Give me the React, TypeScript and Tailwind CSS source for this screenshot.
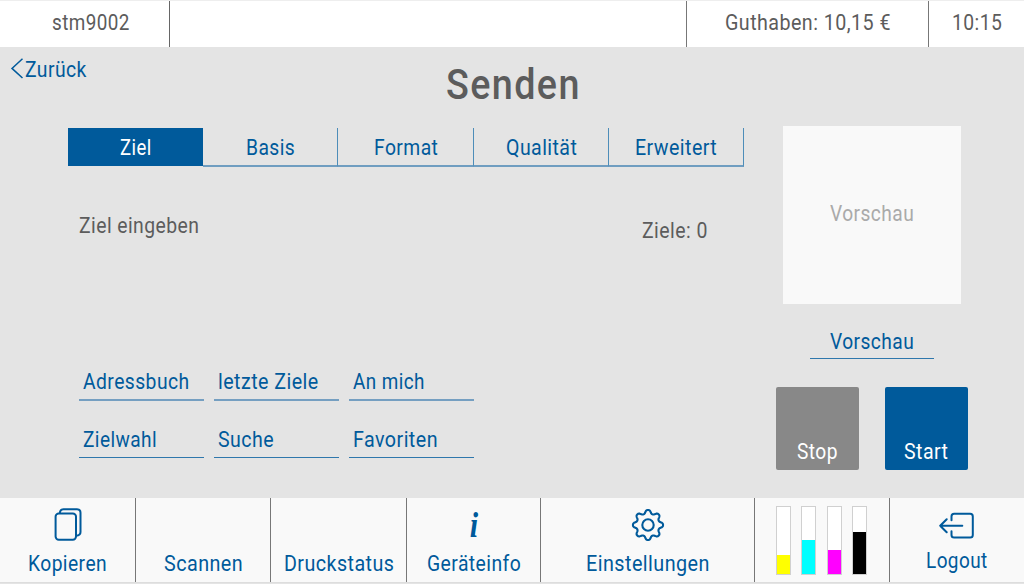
import { useLayoutEffect, useRef, useState } from "react";
import type { ReactNode } from "react";
import clsx from "clsx";

/** Condensed label: squeezes its glyphs horizontally to the given width. */
function Label({ text, width, className }: { text: string; width: number; className?: string }) {
  const inner = useRef<HTMLSpanElement>(null);
  const [scale, setScale] = useState(0.9);
  useLayoutEffect(() => {
    if (inner.current) setScale(width / inner.current.offsetWidth);
  }, [text, width]);
  return (
    <span className={clsx("block shrink-0", className)} style={{ width }}>
      <span
        ref={inner}
        className="inline-block origin-left whitespace-nowrap align-top"
        style={{ transform: `scaleX(${scale})` }}
      >
        {text}
      </span>
    </span>
  );
}

const tabs = [
  { text: "Ziel", width: 32 },
  { text: "Basis", width: 49 },
  { text: "Format", width: 64 },
  { text: "Qualität", width: 71 },
  { text: "Erweitert", width: 82 },
];

const linkRows = [
  [
    { text: "Adressbuch", width: 107 },
    { text: "letzte Ziele", width: 101 },
    { text: "An mich", width: 72 },
  ],
  [
    { text: "Zielwahl", width: 74.5 },
    { text: "Suche", width: 56 },
    { text: "Favoriten", width: 85 },
  ],
];

const toners = [
  { name: "yellow", color: "bg-[#ffff00]", level: 19.5 },
  { name: "cyan", color: "bg-[#00ffff]", level: 34 },
  { name: "magenta", color: "bg-[#ff00ff]", level: 24.5 },
  { name: "black", color: "bg-black", level: 42.5 },
];

function CopyIcon() {
  return (
    <svg width="28" height="34" viewBox="0 0 28 34" fill="none" stroke="currentColor" strokeWidth="2">
      <rect x="1.6" y="5.4" width="20.4" height="26.4" rx="3.2" />
      <path d="M5.8 5.2C6 2.6 7.1 1.2 9.4 1.2H23C25.2 1.2 26.5 2.5 26.5 4.7V24C26.5 26.4 24.9 27.5 22.2 27.7" />
    </svg>
  );
}

function gearPath() {
  const points: string[] = [];
  for (let i = 0; i <= 160; i++) {
    const a = (i / 160) * Math.PI * 2;
    const c = Math.cos(8 * a);
    const r = 13.3 + (1.75 * Math.tanh(1.2 * c)) / Math.tanh(1.2);
    points.push(`${(17 + r * Math.sin(a)).toFixed(2)} ${(17 - r * Math.cos(a)).toFixed(2)}`);
  }
  return `M${points.join("L")}Z`;
}

function GearIcon() {
  return (
    <svg width="34" height="34" viewBox="0 0 34 34" fill="none" stroke="currentColor" strokeWidth="2.1" strokeLinejoin="round">
      <path d={gearPath()} />
      <circle cx="17" cy="17" r="5.7" />
    </svg>
  );
}

function LogoutIcon() {
  return (
    <svg width="36" height="28" viewBox="0 0 36 28" fill="none" stroke="currentColor" strokeWidth="2" strokeLinecap="round" strokeLinejoin="round">
      <path d="M12.5 8.2V4.4Q12.5 1.8 15.1 1.8H31.2Q33.8 1.8 33.8 4.4V23Q33.8 25.6 31.2 25.6H15.1Q12.5 25.6 12.5 23V19.2" />
      <path d="M23.3 13.7H1.2M7.7 7.2L1.2 13.7L7.7 20.2" />
    </svg>
  );
}

function NavItem({ text, width, icon, className }: { text: string; width: number; icon?: ReactNode; className: string }) {
  return (
    <button className={clsx("flex shrink-0 flex-col items-center border-r border-[#777] pl-px", className)}>
      <span className="flex h-[53px] items-start justify-center pt-[10px]">{icon}</span>
      <Label text={text} width={width} />
    </button>
  );
}

export default function App() {
  return (
    <div className="flex h-[584px] w-[1024px] flex-col overflow-hidden bg-[#e4e4e4] font-['Roboto','Liberation_Sans',sans-serif] text-[22px] leading-[26px] tracking-[0.5px] text-[#5c5c5c]">
      <header className="flex h-[47px] shrink-0 border-t border-[#eee] bg-white">
        <div className="flex w-[170px] border-r border-[#666] pt-[9px] pl-[51.5px]">
          <Label text="stm9002" width={78} />
        </div>
        <div className="w-[517px] border-r border-[#777]" />
        <div className="flex w-[242px] border-r border-[#777] pt-[9px] pl-[38px]">
          <Label text="Guthaben: 10,15 €" width={165.5} />
        </div>
        <div className="pt-[9px] pl-[23px]">
          <Label text="10:15" width={50} />
        </div>
      </header>

      <main className="flex h-[451px] shrink-0 flex-col">
        <div className="flex h-[79px] shrink-0">
          <button className="flex w-[445px] items-start pt-[10px] pl-[10px] text-[#005a9b]">
            <svg className="mt-px" width="15" height="21" viewBox="0 0 15 21" fill="none" stroke="currentColor" strokeWidth="1.5">
              <path d="M12.5 0.8L2 10.4L12.5 20" />
            </svg>
            <Label text="Zurück" width={61.5} />
          </button>
          <h1 className="pt-[13px] text-[43px] leading-[48px] font-medium tracking-[1.6px]">
            <Label text="Senden" width={135} className="ml-[0.5px]" />
          </h1>
        </div>

        <div className="flex pl-[68px]">
          <section className="w-[676px] pt-[2px]">
            <nav className="flex h-[39px] text-[#005a9b]">
              {tabs.map((tab, i) => (
                <button
                  key={tab.text}
                  className={clsx(
                    "flex justify-center pt-[7px]",
                    i === 0
                      ? "mb-px w-[135px] bg-[#005a9b] pl-px text-white"
                      : "flex-1 border-r border-b-2 border-r-[#4d8db9] border-b-[#6f9dc0] pl-px",
                  )}
                >
                  <Label text={tab.text} width={tab.width} />
                </button>
              ))}
            </nav>
            <div className="flex h-[193px] justify-between pt-[46px] pr-[37px] pl-[10.5px]">
              <Label text="Ziel eingeben" width={120.5} />
              <Label text="Ziele: 0" width={65.5} className="mt-[5px]" />
            </div>
            <div className="grid w-[416px] grid-cols-3 gap-y-[25px] pt-px pl-[11px]">
              {linkRows.map((row, r) =>
                row.map((link) => (
                  <button
                    key={link.text}
                    className={clsx(
                      "flex w-[124.5px] pl-[3.6px] text-[#005a9b]",
                      r === 0
                        ? "h-[40px] border-b-2 border-[#759fc1] pt-[8px]"
                        : "h-[32px] border-b border-[#2f77ac] pt-px",
                    )}
                  >
                    <Label text={link.text} width={link.width} />
                  </button>
                )),
              )}
            </div>
          </section>

          <aside className="ml-[32px] flex w-[192px] flex-col items-center">
            <div className="flex h-[178px] w-[178px] justify-center bg-[#f9f9f9] pt-[75px] text-[#aaa]">
              <Label text="Vorschau" width={84.5} />
            </div>
            <button className="mt-[22px] flex h-[33px] w-[124px] justify-center border-b border-[#2f77ac] pt-[3px] text-[#005a9b]">
              <Label text="Vorschau" width={84.5} />
            </button>
            <div className="mt-[28px] flex w-full justify-between text-white">
              <button className="flex h-[83px] w-[83px] justify-center rounded-[2px] bg-[#888] pt-[52px]">
                <Label text="Stop" width={41} />
              </button>
              <button className="flex h-[83px] w-[83px] justify-center rounded-[2px] bg-[#005a9b] pt-[52px]">
                <Label text="Start" width={44.5} />
              </button>
            </div>
          </aside>
        </div>
      </main>

      <footer className="flex h-[85px] shrink-0 border-b border-[#ddd] bg-[#f9f9f9] text-[#005a9b]">
        <NavItem text="Kopieren" width={79.5} icon={<CopyIcon />} className="w-[136px]" />
        <NavItem text="Scannen" width={79} className="w-[135px]" />
        <NavItem text="Druckstatus" width={110} className="w-[136px]" />
        <NavItem
          text="Geräteinfo"
          width={94}
          className="w-[134px]"
          icon={<span className="scale-x-[0.86] font-['Liberation_Serif',serif] text-[35px] leading-[36px] font-bold tracking-normal italic">i</span>}
        />
        <NavItem text="Einstellungen" width={124} icon={<GearIcon />} className="w-[214px]" />
        <div className="flex w-[135px] gap-[10.4px] border-r border-[#777] pt-[8px] pl-[21px]">
          {toners.map((toner) => (
            <div key={toner.name} className="flex h-[69px] w-[15px] flex-col justify-end border border-[#d0d0d0] bg-white">
              <div className={toner.color} style={{ height: toner.level }} />
            </div>
          ))}
        </div>
        <button className="flex flex-1 flex-col items-center">
          <span className="flex h-[50px] items-start pt-[13.5px]">
            <LogoutIcon />
          </span>
          <Label text="Logout" width={62} />
        </button>
      </footer>
    </div>
  );
}
